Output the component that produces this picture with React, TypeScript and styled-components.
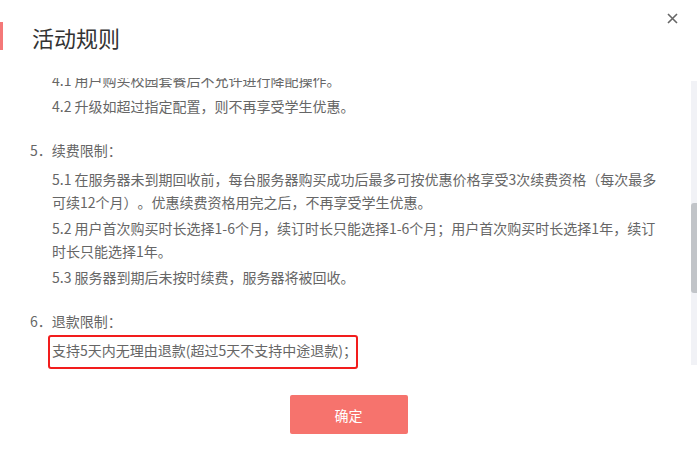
import React from 'react';
import styled, { createGlobalStyle } from 'styled-components';

const GlobalStyle = createGlobalStyle`
  html, body {
    margin: 0;
    padding: 0;
    background: #fff;
  }
  body {
    font-family: "Noto Sans CJK SC", "Noto Sans", sans-serif;
    text-spacing-trim: space-all;
  }
`;

const Dialog = styled.div`
  position: relative;
  width: 697px;
  height: 455px;
  background: #fff;
  display: flex;
  flex-direction: column;
  overflow: hidden;
`;

const Header = styled.div`
  height: 78px;
  display: flex;
  align-items: flex-start;
  flex-shrink: 0;
`;

const Accent = styled.span`
  width: 3px;
  height: 28px;
  margin-top: 22px;
  background: #f47878;
`;

const Title = styled.h2`
  margin: 22px 0 0 29px;
  font-size: 22px;
  line-height: 30px;
  font-weight: 400;
  color: #333;
`;

const CloseButton = styled.button`
  margin: 11px 17px 0 auto;
  width: 15px;
  height: 15px;
  padding: 0;
  border: none;
  background: none;
  display: flex;
  align-items: center;
  justify-content: center;
  cursor: pointer;
`;

const Body = styled.div`
  height: 287px;
  display: flex;
  flex-shrink: 0;
`;

const Viewport = styled.div`
  flex: 1;
  overflow: hidden;
  padding: 0 29px 0 30px;
`;

const Scrolled = styled.div<{ $offset: number }>`
  margin-top: -${(p) => p.$offset}px;
`;

const Section = styled.section`
  & + & {
    margin-top: 21px;
  }
`;

const Heading = styled.div`
  font-size: 14px;
  line-height: 23px;
  color: #666;
  margin-bottom: 6px;
`;

const Item = styled.p`
  margin: 0 0 0 22px;
  font-size: 14px;
  line-height: 23px;
  color: #666;
  text-spacing-trim: space-all;

  & + & {
    margin-top: 3px;
  }
`;

const Rail = styled.div`
  width: 6px;
  margin-top: 3px;
  background: #f1f2f6;
`;

const Thumb = styled.div<{ $top: number; $size: number }>`
  margin-top: ${(p) => p.$top}px;
  height: ${(p) => p.$size}px;
  background: #c1c4c8;
  border-radius: 3px 0 0 3px;
`;

const Footer = styled.div`
  display: flex;
  justify-content: center;
  padding-top: 30px;
`;

const ConfirmButton = styled.button`
  width: 118px;
  height: 39px;
  border: none;
  border-radius: 2px;
  background: #f6736d;
  color: #fff;
  font-family: inherit;
  font-size: 14px;
  cursor: pointer;
`;

const Highlight = styled.div`
  position: absolute;
  left: 48px;
  top: 335px;
  width: 306px;
  height: 30px;
  border: 2px solid #f21d1d;
  border-radius: 3px;
  pointer-events: none;
`;

const sections = [
  {
    heading: null,
    items: [
      '4.1 用户购买校园套餐后不允许进行降配操作。',
      '4.2 升级如超过指定配置，则不再享受学生优惠。',
    ],
  },
  {
    heading: '5．续费限制：',
    items: [
      '5.1 在服务器未到期回收前，每台服务器购买成功后最多可按优惠价格享受3次续费资格（每次最多可续12个月）。优惠续费资格用完之后，不再享受学生优惠。',
      '5.2 用户首次购买时长选择1-6个月，续订时长只能选择1-6个月；用户首次购买时长选择1年，续订时长只能选择1年。',
      '5.3 服务器到期后未按时续费，服务器将被回收。',
    ],
  },
  {
    heading: '6．退款限制：',
    items: ['支持5天内无理由退款(超过5天不支持中途退款)；'],
  },
];

export default function App() {
  return (
    <>
      <GlobalStyle />
      <Dialog>
        <Header>
          <Accent />
          <Title>活动规则</Title>
          <CloseButton aria-label="关闭">
            <svg width="11" height="11" viewBox="0 0 11 11">
              <path d="M1 1L10 10M10 1L1 10" stroke="#666" strokeWidth="1.6" />
            </svg>
          </CloseButton>
        </Header>
        <Body>
          <Viewport>
            <Scrolled $offset={9}>
              {sections.map((s, i) => (
                <Section key={i}>
                  {s.heading && <Heading>{s.heading}</Heading>}
                  {s.items.map((t) => (
                    <Item key={t}>{t}</Item>
                  ))}
                </Section>
              ))}
            </Scrolled>
          </Viewport>
          <Rail>
            <Thumb $top={122} $size={90} />
          </Rail>
        </Body>
        <Footer>
          <ConfirmButton>确定</ConfirmButton>
        </Footer>
        <Highlight />
      </Dialog>
    </>
  );
}
